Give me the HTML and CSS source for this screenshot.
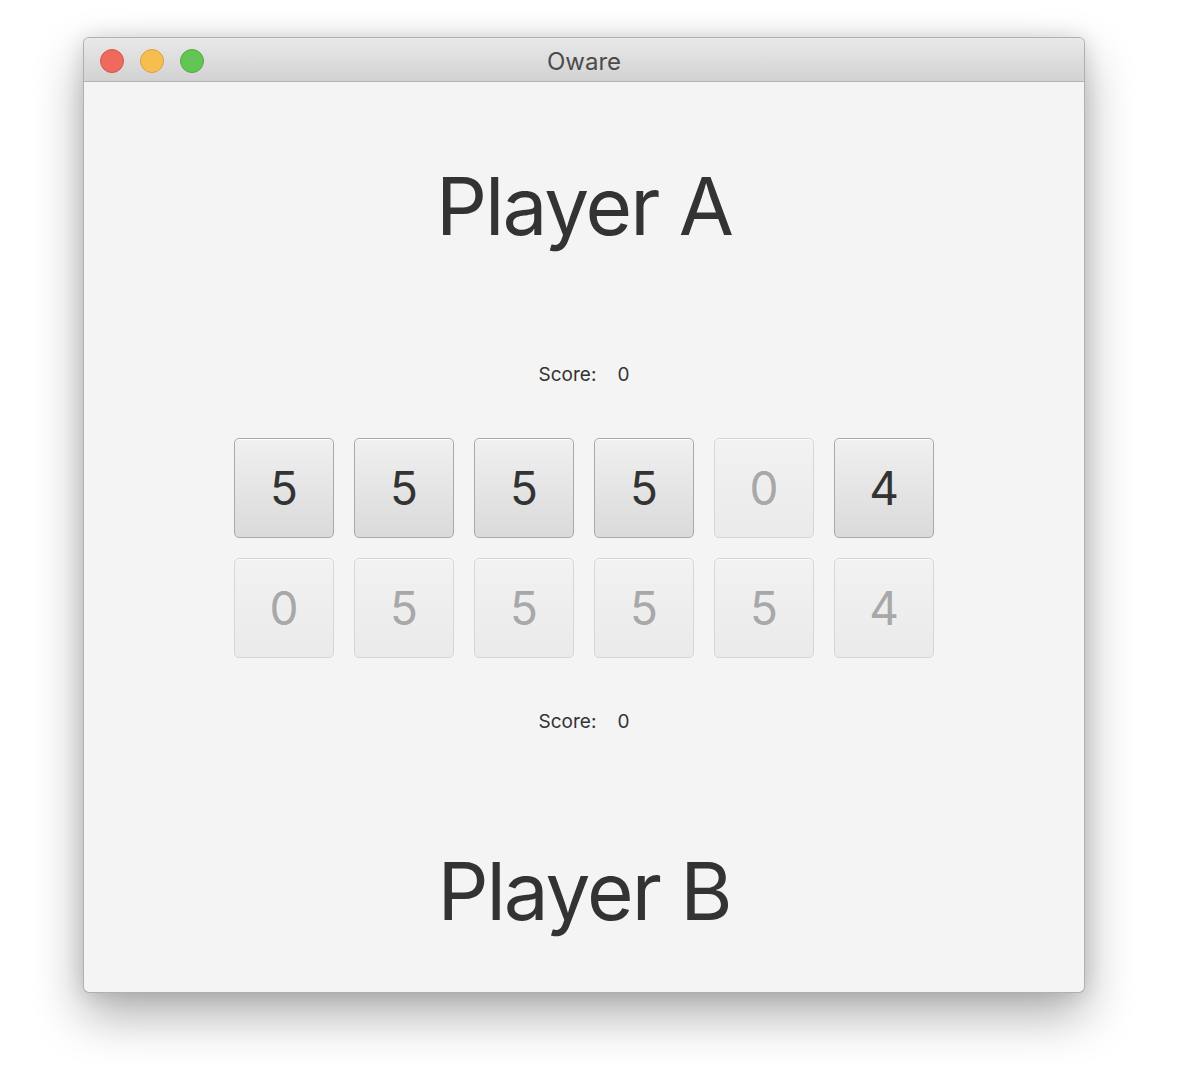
FILE: index.html
```html
<!DOCTYPE html>
<html>
<head>
<meta charset="utf-8">
<title>Oware</title>
<link rel="stylesheet" href="styles.css">
</head>
<body>
<div class="window">
  <div class="titlebar">
    <div class="lights">
      <span class="light red"></span>
      <span class="light yellow"></span>
      <span class="light green"></span>
    </div>
    <div class="title">Oware</div>
  </div>
  <div class="content">
    <div class="player player-a">Player A</div>
    <div class="score score-a"><span class="score-label">Score:</span><span class="score-value">0</span></div>
    <div class="board">
      <div class="row">
        <button class="pit">5</button>
        <button class="pit">5</button>
        <button class="pit">5</button>
        <button class="pit">5</button>
        <button class="pit" disabled>0</button>
        <button class="pit">4</button>
      </div>
      <div class="row">
        <button class="pit" disabled>0</button>
        <button class="pit" disabled>5</button>
        <button class="pit" disabled>5</button>
        <button class="pit" disabled>5</button>
        <button class="pit" disabled>5</button>
        <button class="pit" disabled>4</button>
      </div>
    </div>
    <div class="score score-b"><span class="score-label">Score:</span><span class="score-value">0</span></div>
    <div class="player player-b">Player B</div>
  </div>
</div>
</body>
</html>
```
FILE: styles.css
```css
html, body {
  margin: 0;
  padding: 0;
  background: #ffffff;
}
body {
  box-sizing: border-box;
  min-height: 1074px;
  padding: 37px 0 0 83px;
  font-family: Inter, "Noto Sans", sans-serif;
}
.window {
  width: 1000px;
  height: 954px;
  border: 1px solid rgba(0, 0, 0, 0.28);
  border-radius: 6px;
  background: #f4f4f4;
  overflow: hidden;
  box-shadow: 0 22px 50px rgba(0, 0, 0, 0.32), 0 0 20px rgba(0, 0, 0, 0.12);
  display: flex;
  flex-direction: column;
}
.titlebar {
  position: relative;
  height: 43px;
  flex: 0 0 43px;
  background: linear-gradient(#e9e9e9, #d2d2d2);
  border-bottom: 1px solid #b3b3b3;
  display: flex;
  align-items: center;
  justify-content: center;
}
.lights {
  position: absolute;
  left: 16px;
  top: 11px;
  display: flex;
  gap: 16px;
}
.light {
  width: 22px;
  height: 22px;
  border-radius: 50%;
  display: block;
}
.red { background: #ee6a5f; border: 1px solid #d65347; }
.yellow { background: #f6be4f; border: 1px solid #d9a140; }
.green { background: #62c655; border: 1px solid #52a840; }
.title {
  font-size: 24px;
  color: #4b4b4b;
  line-height: 1;
  margin-top: 4px;
}
.content {
  flex: 1;
  display: flex;
  flex-direction: column;
  align-items: center;
}
.player {
  font-size: 80px;
  line-height: 100px;
  color: #333333;
  letter-spacing: -2px;
}
.player-a { margin-top: 74px; }
.score {
  font-size: 19px;
  line-height: 22px;
  color: #333333;
  display: flex;
  gap: 21px;
}
.score-a { margin-top: 108px; }
.board {
  margin-top: 52px;
  display: flex;
  flex-direction: column;
  gap: 20px;
}
.row {
  display: flex;
  gap: 20px;
}
.pit {
  width: 100px;
  height: 100px;
  box-sizing: border-box;
  margin: 0;
  padding: 0;
  border-radius: 5px;
  border: 1px solid #a9a9a9;
  background: linear-gradient(#f0f0f0, #dadada);
  box-shadow: inset 0 1px 0 #ffffff;
  font-family: Inter, "Noto Sans", sans-serif;
  font-size: 46px;
  color: #333333;
  display: flex;
  align-items: center;
  justify-content: center;
}
.pit:disabled {
  border-color: #d6d6d6;
  background: linear-gradient(#f2f2f2, #eaeaea);
  box-shadow: inset 0 1px 0 #fafafa;
  color: #a8a8a8;
}
.score-b { margin-top: 53px; }
.player-b { margin-top: 108px; }
```
